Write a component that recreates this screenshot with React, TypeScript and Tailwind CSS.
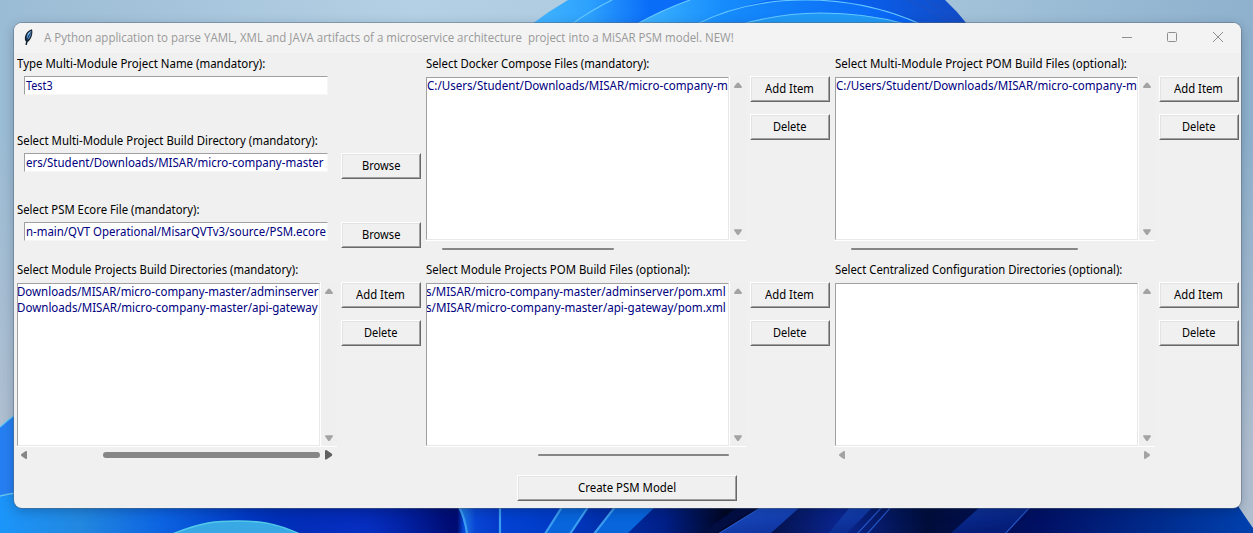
import { useLayoutEffect, useRef } from "react";
import type { ReactNode } from "react";

/* One line of text, condensed horizontally to a given advance width. */
function Line({ children, width, className = "" }: { children: string; width: number; className?: string }) {
  const ref = useRef<HTMLSpanElement>(null);
  useLayoutEffect(() => {
    const el = ref.current;
    if (el) el.style.transform = `scaleX(${width / el.offsetWidth})`;
  }, [width, children]);
  return (
    <span className={`block shrink-0 ${className}`} style={{ width }}>
      <span ref={ref} className="inline-block origin-left whitespace-pre">
        {children}
      </span>
    </span>
  );
}

function Label({ children, width }: { children: string; width: number }) {
  return (
    <div className="flex h-[23px] items-center pb-[2px] pl-[3px] text-black">
      <Line width={width}>{children}</Line>
    </div>
  );
}

function Button({ children, textWidth, wide = false }: { children: string; textWidth: number; wide?: boolean }) {
  return (
    <button
      className={`h-[26px] shrink-0 border border-t-white border-l-white border-r-[#696969] border-b-[#696969] bg-[#f0f0f0] text-black ${
        wide ? "w-[220px]" : "w-20"
      }`}
    >
      <span className="flex h-full items-center justify-center border border-t-[#e3e3e3] border-l-[#e3e3e3] border-r-[#a0a0a0] border-b-[#a0a0a0] pr-px">
        <Line width={textWidth} className="text-left">
          {children}
        </Line>
      </span>
    </button>
  );
}

function Entry({ children, width }: { children: string; width: number }) {
  return (
    <div className="ml-[10px] flex h-[19px] w-[304px] shrink-0 items-center overflow-hidden border border-t-[#a0a0a0] border-l-[#a0a0a0] border-r-[#f6f6f6] border-b-[#f6f6f6] bg-white pl-px text-[#000080]">
      <Line width={width}>{children}</Line>
    </div>
  );
}

const ARROWS = {
  up: "M4 0.5 Q4.6 0.5 5 1 L7.8 4.6 Q8.2 6 7.2 6 H0.8 Q-0.2 6 0.2 4.6 L3 1 Q3.4 0.5 4 0.5Z",
  down: "M4 6 Q3.4 6 3 5.5 L0.2 1.6 Q-0.2 0.2 0.8 0.2 H7.2 Q8.2 0.2 7.8 1.6 L5 5.5 Q4.6 6 4 6Z",
  left: "M0 4 Q0 3.4 0.5 3 L4.4 0.2 Q6 -0.2 6 0.8 V7.2 Q6 8.2 4.4 7.8 L0.5 5 Q0 4.6 0 4Z",
  right: "M6 4 Q6 3.4 5.5 3 L1.5 0.2 Q0 -0.2 0 0.8 V7.2 Q0 8.2 1.5 7.8 L5.5 5 Q6 4.6 6 4Z",
};

function Arrow({ dir, color = "#a3a3a3", large = false }: { dir: keyof typeof ARROWS; color?: string; large?: boolean }) {
  const vertical = dir === "up" || dir === "down";
  const scale = large ? 1.2 : 1;
  return (
    <svg
      width={(vertical ? 8 : 6) * scale}
      height={(vertical ? 6 : 8) * scale}
      viewBox={vertical ? "0 0 8 6" : "0 0 6 8"}
    >
      <path d={ARROWS[dir]} fill={color} />
    </svg>
  );
}

type ListProps = {
  title: string;
  titleWidth: number;
  items?: { text: string; width: number }[];
  thumb?: { from: number; to: number };
  hover?: boolean;
  arrows?: boolean;
};

function ListPanel({ title, titleWidth, items = [], thumb, hover = false, arrows = false }: ListProps) {
  return (
    <section className="h-[206px] w-[409px]">
      <Label width={titleWidth}>{title}</Label>
      <div className="flex">
        <div className="ml-[2px] w-[321px]">
          <div className="flex h-[165px] border-b border-white">
            <div className="flex w-[305px] border-r border-white pt-px pl-px">
              <div className="h-[163px] w-[303px] overflow-hidden border border-t-[#a0a0a0] border-l-[#a0a0a0] border-r-[#e8e8e8] border-b-[#e8e8e8] bg-white leading-4 text-[#000080]">
                {items.map((item) => (
                  <Line key={item.text} width={item.width} className={item.text.startsWith("C:") ? "" : "-ml-px"}>
                    {item.text}
                  </Line>
                ))}
              </div>
            </div>
            <div className="flex w-4 flex-col items-center justify-between bg-[#efefef] pt-[6px] pb-[5px]">
              <Arrow dir="up" />
              <Arrow dir="down" />
            </div>
          </div>
          <div className="flex h-4 items-center">
            <div className="flex w-4 justify-center">
              {arrows && <Arrow dir="left" color={hover ? "#868686" : "#a3a3a3"} />}
            </div>
            <div className="flex-1">
              {thumb && (
                <div
                  className={`rounded-full bg-[#868686] ${hover ? "h-[6px]" : "h-[2px]"}`}
                  style={{ marginLeft: thumb.from - 16, width: thumb.to - thumb.from }}
                />
              )}
            </div>
            <div className="flex w-4 justify-center">
              {arrows && <Arrow dir="right" color={hover ? "#606060" : "#a3a3a3"} large={hover} />}
            </div>
          </div>
        </div>
        <div className="ml-1 flex flex-col gap-3">
          <Button textWidth={49}>Add Item</Button>
          <Button textWidth={34}>Delete</Button>
        </div>
      </div>
    </section>
  );
}

function Field({ label, labelWidth, className, children }: { label: string; labelWidth: number; className: string; children: ReactNode }) {
  return (
    <div className={className}>
      <Label width={labelWidth}>{label}</Label>
      <div className="flex items-start gap-[13px]">{children}</div>
    </div>
  );
}

function Wallpaper() {
  return (
    <svg className="absolute inset-0" width="1253" height="533" viewBox="0 0 1253 533">
      <defs>
        <linearGradient id="sky">
          <stop offset="0" stopColor="#9bbcd5" />
          <stop offset=".33" stopColor="#b4d0e4" />
          <stop offset=".75" stopColor="#a3c3da" />
          <stop offset="1" stopColor="#8eb1cd" />
        </linearGradient>
        <linearGradient id="skyLow" x2="0" y2="1">
          <stop offset=".25" stopColor="#b0bfd0" stopOpacity="0" />
          <stop offset=".85" stopColor="#b0bfd0" />
        </linearGradient>
        <linearGradient id="petalA" x1="532" x2="966" gradientUnits="userSpaceOnUse">
          <stop offset="0" stopColor="#43b5ff" />
          <stop offset=".13" stopColor="#2da2fd" />
          <stop offset=".27" stopColor="#0a6df8" />
          <stop offset=".7" stopColor="#0763f5" />
          <stop offset="1" stopColor="#124bc4" />
        </linearGradient>
        <linearGradient id="petalB" x1="637" x2="920" gradientUnits="userSpaceOnUse">
          <stop offset="0" stopColor="#40b6ff" />
          <stop offset=".3" stopColor="#168dfc" />
          <stop offset="1" stopColor="#0760f4" />
        </linearGradient>
        <linearGradient id="floor" x1="0" x2="1253" gradientUnits="userSpaceOnUse">
          <stop offset="0" stopColor="#1b95fa" />
          <stop offset=".065" stopColor="#2287df" />
          <stop offset=".13" stopColor="#0c63e2" />
          <stop offset=".2" stopColor="#0037c4" />
          <stop offset=".28" stopColor="#001a99" />
          <stop offset=".365" stopColor="#000c72" />
          <stop offset=".37" stopColor="#0448db" />
          <stop offset=".45" stopColor="#0039c4" />
          <stop offset=".53" stopColor="#001f87" />
          <stop offset=".58" stopColor="#00051f" />
          <stop offset=".67" stopColor="#0a2590" />
          <stop offset=".74" stopColor="#000d3a" />
          <stop offset=".83" stopColor="#001064" />
          <stop offset="1" stopColor="#0041ae" />
        </linearGradient>
        <linearGradient id="petalC" x1="459" x2="500" gradientUnits="userSpaceOnUse">
          <stop offset="0" stopColor="#2687e9" />
          <stop offset=".4" stopColor="#0846d5" />
          <stop offset="1" stopColor="#0538c8" />
        </linearGradient>
        <linearGradient id="petalD" x1="0" x2="1" y1="0" y2=".6">
          <stop offset="0" stopColor="#1c50cc" />
          <stop offset="1" stopColor="#041d78" />
        </linearGradient>
        <radialGradient id="glow" cx="360" cy="545" r="90" gradientUnits="userSpaceOnUse">
          <stop offset="0" stopColor="#0a3fe0" stopOpacity=".7" />
          <stop offset="1" stopColor="#0a3fe0" stopOpacity="0" />
        </radialGradient>
      </defs>
      <rect width="1253" height="533" fill="url(#sky)" />
      <rect width="1253" height="533" fill="url(#skyLow)" />
      <path d="M532 24 Q549 11 568 0 H945 Q957 11 967 24Z" fill="url(#petalA)" />
      <path d="M637 24 Q662 10 690 0 H770 Q731 7 697 24Z" fill="url(#petalB)" />
      <path d="M697 24 Q745 0 805 0 Q867 0 920 24Z" fill="url(#petalB)" />
      <path d="M742 24 Q783 13 820 13 Q867 13 905 24Z" fill="#209af6" />
      <g fill="none" stroke="#65c7ff" strokeWidth="1.2">
        <path d="M572 24 Q590 11 612 0 M637 24 Q662 10 690 0 M697 24 Q745 0 805 0 Q867 0 920 24 M742 24 Q783 13 820 13 Q867 13 905 24" />
      </g>
      <path d="M926 0 Q944 10 959 24 M907 0 Q934 10 951 24" stroke="#1d50c0" fill="none" />
      <path d="M0 427 Q8 420 16 414 V533 H0Z" fill="#267ff2" />
      <path d="M0 497 L16 494 V506 H1238 Q1246 518 1253 528 V533 H0Z" fill="url(#floor)" />
      <path d="M0 427 Q8 420 16 414 M0 496 Q8 494 16 493" stroke="#62c7f2" strokeWidth="1.3" fill="none" />
      <rect x="270" y="507" width="180" height="26" fill="url(#glow)" />
      <path d="M170 535 C204 521 218 521 238 521 S274 522 302 535Z" fill="#39a9e6" stroke="#52cce9" strokeWidth="1.5" />
      <path d="M459 507 H500 V533 H467 Q465 518 459 507Z" fill="url(#petalC)" />
      <path d="M562 507 L545 534 H570 L588 507Z M594 534 L616 507 H655 L627 534Z" fill="#0865dc" />
      <path d="M718 534 L762 507 H800 L770 534Z M828 534 L850 507 H873 L846 534Z M950 534 L980 507 H1030 L1005 534Z" fill="url(#petalD)" />
      <path d="M700 534 L738 507 H758 L714 534Z" fill="#020d42" />
      <path d="M459 507 Q465 518 467 534 M500 507 V534 M562 507 L545 534 M588 507 L570 534 M615 507 L594 534" stroke="#3b9df0" strokeWidth="2.2" fill="none" />
      <path d="M762 507 L718 534 M882 507 L857 534 M891 507 L867 534 M1030 507 L1005 534" stroke="#2456c8" strokeWidth="1.2" fill="none" />
    </svg>
  );
}

function Feather() {
  return (
    <svg width="16" height="16" viewBox="0 0 16 16">
      <path d="M4.2 15.8 L5 11" stroke="#101820" strokeWidth="1.5" fill="none" />
      <path d="M3.4 12 C1.4 7.5 4.8 1.4 10 .2 C11.4 5.5 8.6 11 5.6 13Z" fill="#16202b" />
      <path d="M4.8 10 C4 6 6.4 2.8 9.2 1.7 C9.8 5.6 7.8 9.4 5.5 10.8Z" fill="#5594d6" />
      <path d="M4.5 14.8 L5.3 10 L8.9 3" stroke="#10263f" strokeWidth=".8" fill="none" />
      <path d="M6.2 5.5 L8 3.1" stroke="#b7dcf5" strokeWidth=".9" />
    </svg>
  );
}

export default function App() {
  return (
    <div className="relative h-[533px] w-[1253px] overflow-hidden font-['Noto_Sans','Open_Sans',sans-serif] text-xs">
      <Wallpaper />
      <div className="relative px-[14px] pt-[23px]">
        <main className="h-[485px] w-[1227px] overflow-hidden rounded-lg bg-[#f0f0f0] shadow-[0_0_0_1px_rgba(90,105,120,0.45),0_3px_12px_rgba(0,20,50,0.28)]">
          <header className="flex h-[30px] items-center bg-[#f3f3f3] pr-[17px] pl-2 font-['Open_Sans',sans-serif] text-[#999999]">
            <span className="pb-[2px]">
              <Feather />
            </span>
            <Line width={690} className="ml-[6px]">
              A Python application to parse YAML, XML and JAVA artifacts of a microservice architecture  project into a MiSAR PSM model. NEW!
            </Line>
            <svg className="mb-[2px] ml-auto" width="102" height="12" viewBox="0 0 102 12" fill="none" stroke="#8f8f8f">
              <path d="M0 6.5H10" />
              <rect x="45.5" y="1.5" width="9" height="9" rx="1" />
              <path d="M91 1L101 11M101 1L91 11" />
            </svg>
          </header>

          <div className="grid grid-cols-[409px_409px_409px] grid-rows-[206px_206px]">
            <section>
              <Field label="Type Multi-Module Project Name (mandatory):" labelWidth={248} className="h-[77px]">
                <Entry width={27}>Test3</Entry>
              </Field>
              <Field label="Select Multi-Module Project Build Directory (mandatory):" labelWidth={301} className="h-[69px]">
                <Entry width={298}>ers/Student/Downloads/MISAR/micro-company-master</Entry>
                <Button textWidth={38}>Browse</Button>
              </Field>
              <Field label="Select PSM Ecore File (mandatory):" labelWidth={182} className="h-[60px]">
                <Entry width={300}>n-main/QVT Operational/MisarQVTv3/source/PSM.ecore</Entry>
                <Button textWidth={38}>Browse</Button>
              </Field>
            </section>

            <ListPanel
              title="Select Docker Compose Files (mandatory):"
              titleWidth={223}
              items={[{ text: "C:/Users/Student/Downloads/MISAR/micro-company-m", width: 301 }]}
              thumb={{ from: 17, to: 189 }}
            />
            <ListPanel
              title="Select Multi-Module Project POM Build Files (optional):"
              titleWidth={292}
              items={[{ text: "C:/Users/Student/Downloads/MISAR/micro-company-m", width: 301 }]}
              thumb={{ from: 17, to: 244 }}
            />
            <ListPanel
              title="Select Module Projects Build Directories (mandatory):"
              titleWidth={281}
              items={[
                { text: "Downloads/MISAR/micro-company-master/adminserver", width: 301 },
                { text: "Downloads/MISAR/micro-company-master/api-gateway", width: 301 },
              ]}
              thumb={{ from: 87, to: 304 }}
              hover
              arrows
            />
            <ListPanel
              title="Select Module Projects POM Build Files (optional):"
              titleWidth={264}
              items={[
                { text: "s/MISAR/micro-company-master/adminserver/pom.xml", width: 300 },
                { text: "s/MISAR/micro-company-master/api-gateway/pom.xml", width: 300 },
              ]}
              thumb={{ from: 113, to: 304 }}
            />
            <ListPanel title="Select Centralized Configuration Directories (optional):" titleWidth={287} arrows />
          </div>

          <footer className="flex justify-center pt-[10px] pr-px">
            <Button wide textWidth={98}>
              Create PSM Model
            </Button>
          </footer>
        </main>
      </div>
    </div>
  );
}
